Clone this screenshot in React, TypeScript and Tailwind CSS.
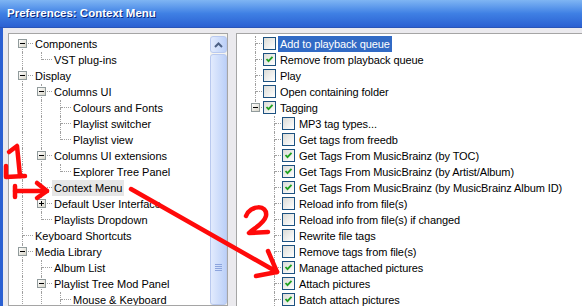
import React from "react";

// 偽のXPウィンドウ: 左がツリー、右がチェックボックス付きツリー
type Row = {
  label: string;
  rails: boolean[];
  first?: boolean;
  last?: boolean;
  exp?: "-" | "+";
  check?: boolean;
  selected?: "blue" | "gray";
};

const leftRows: Row[] = [
  { label: "Components", rails: [], first: true, exp: "-" },
  { label: "VST plug-ins", rails: [true], last: true },
  { label: "Display", rails: [], exp: "-" },
  { label: "Columns UI", rails: [true], exp: "-" },
  { label: "Colours and Fonts", rails: [true, true] },
  { label: "Playlist switcher", rails: [true, true] },
  { label: "Playlist view", rails: [true, true], last: true },
  { label: "Columns UI extensions", rails: [true], exp: "-" },
  { label: "Explorer Tree Panel", rails: [true, true], last: true },
  { label: "Context Menu", rails: [true], selected: "gray" },
  { label: "Default User Interface", rails: [true], exp: "+" },
  { label: "Playlists Dropdown", rails: [true], last: true },
  { label: "Keyboard Shortcuts", rails: [] },
  { label: "Media Library", rails: [], exp: "-" },
  { label: "Album List", rails: [true] },
  { label: "Playlist Tree Mod Panel", rails: [true], exp: "-" },
  { label: "Mouse & Keyboard", rails: [true, true] },
];

const rightRows: Row[] = [
  { label: "Add to playback queue", rails: [], check: false, selected: "blue" },
  { label: "Remove from playback queue", rails: [], check: true },
  { label: "Play", rails: [], check: false },
  { label: "Open containing folder", rails: [], check: false },
  { label: "Tagging", rails: [], check: true, exp: "-", last: true },
  { label: "MP3 tag types...", rails: [false], check: false },
  { label: "Get tags from freedb", rails: [false], check: false },
  { label: "Get Tags From MusicBrainz (by TOC)", rails: [false], check: true },
  { label: "Get Tags From MusicBrainz (by Artist/Album)", rails: [false], check: true },
  { label: "Get Tags From MusicBrainz (by MusicBrainz Album ID)", rails: [false], check: true },
  { label: "Reload info from file(s)", rails: [false], check: false },
  { label: "Reload info from file(s) if changed", rails: [false], check: false },
  { label: "Rewrite file tags", rails: [false], check: false },
  { label: "Remove tags from file(s)", rails: [false], check: false },
  { label: "Manage attached pictures", rails: [false], check: true },
  { label: "Attach pictures", rails: [false], check: true },
  { label: "Batch attach pictures", rails: [false], check: true },
];

const Rail = ({ on }: { on: boolean }) => (
  <div className="flex h-4 w-[19px] shrink-0">
    <div className={on ? "h-full w-[9px] border-r border-dotted border-[#a0a0a0]" : "h-full w-[9px]"} />
  </div>
);

const Expander = ({ kind }: { kind: "-" | "+" }) => (
  <div className="absolute left-[4px] top-[3px] flex h-[9px] w-[9px] items-center justify-center border border-[#919b9c] bg-gradient-to-br from-white to-[#d8d5c8]">
    <div className="relative h-[1px] w-[5px] bg-black">
      {kind === "+" && <div className="absolute left-[2px] top-[-2px] h-[5px] w-[1px] bg-black" />}
    </div>
  </div>
);

const Joint = ({ row, narrow }: { row: Row; narrow?: boolean }) => (
  <div
    className={
      narrow
        ? "relative grid h-4 w-[15px] shrink-0 grid-cols-[9px_6px] grid-rows-[8px_8px]"
        : "relative grid h-4 w-[19px] shrink-0 grid-cols-[9px_10px] grid-rows-[8px_8px]"
    }
  >
    <div className={row.first ? "" : "border-r border-dotted border-[#a0a0a0]"} />
    <div className="border-b border-dotted border-[#a0a0a0]" />
    <div className={row.last ? "" : "border-r border-dotted border-[#a0a0a0]"} />
    <div />
    {row.exp && <Expander kind={row.exp} />}
  </div>
);

const CheckBox = ({ on }: { on: boolean }) => (
  <div className="ml-[1px] mr-[2px] mt-[1px] flex h-[13px] w-[13px] shrink-0 items-center justify-center border border-[#1c5180] bg-gradient-to-br from-[#dcdcd7] to-white">
    {on && (
      <svg width="9" height="9" viewBox="0 0 9 9">
        <path d="M1.5 4 L3.5 6.2 L7.5 1.8" fill="none" stroke="#21a121" strokeWidth="1.8" />
      </svg>
    )}
  </div>
);

const Label = ({ row }: { row: Row }) => {
  let cls = "h-4 whitespace-nowrap px-[2px] leading-4 text-black";
  if (row.selected === "blue") cls = "h-4 whitespace-nowrap px-[2px] leading-4 bg-[#316ac5] text-white";
  if (row.selected === "gray") cls = "h-4 whitespace-nowrap px-[2px] leading-4 bg-[#e6e6e6] text-black";
  return <div className={cls}>{row.label}</div>;
};

const ScrollBar = () => (
  <div className="flex w-[17px] shrink-0 flex-col bg-[#f5f4ef] pt-[2px]">
    <div className="flex h-[17px] items-center justify-center rounded-[3px] border border-[#b9c9ef] bg-gradient-to-r from-[#e2ebfd] to-[#bcd0f8]">
      <svg width="9" height="6" viewBox="0 0 9 6">
        <path d="M1 5 L4.5 1.5 L8 5" fill="none" stroke="#4d6185" strokeWidth="2" />
      </svg>
    </div>
    <div className="mt-[1px] flex flex-1 flex-col items-center justify-end rounded-[3px] border border-[#b9c9ef] bg-gradient-to-r from-[#e2ebfd] to-[#bcd0f8] pb-[33px]">
      <div className="flex flex-col gap-[1px]">
        <div className="h-[1px] w-[7px] bg-[#8ca4dd]" />
        <div className="h-[1px] w-[7px] bg-[#8ca4dd]" />
        <div className="h-[1px] w-[7px] bg-[#8ca4dd]" />
        <div className="h-[1px] w-[7px] bg-[#8ca4dd]" />
      </div>
    </div>
  </div>
);

export default function App() {
  return (
    <div className="relative h-[306px] w-[582px] overflow-hidden bg-[#ebeaee] font-['Liberation_Sans',Arial,sans-serif] text-[11px]">
      <div className="flex h-[28px] items-center border-b border-[#2a55b8] bg-gradient-to-b from-[#7fb5f3] via-[#3f80e4] to-[#2b60d2] pl-[7px]">
        <span className="text-[11.5px] font-bold text-white [text-shadow:1px_1px_0_#0a2a80]">Preferences: Context Menu</span>
      </div>
      <div className="flex h-[278px] gap-[8px] border-l-[3px] border-[#2b60d2] pl-[5px] pt-[5px]">
        <div className="flex w-[220px] shrink-0 border border-[#a5a5a5] bg-white">
          <div className="flex-1 overflow-hidden pl-[5px] pt-[2px]">
            {leftRows.map((r) => (
              <div key={r.label} className="flex h-4">
                {r.rails.map((on, i) => (
                  <Rail key={i} on={on} />
                ))}
                <Joint row={r} />
                <Label row={r} />
              </div>
            ))}
          </div>
          <ScrollBar />
        </div>
        <div className="flex-1 overflow-hidden border-l border-t border-[#a5a5a5] bg-white pl-[10px] pt-[2px]">
          {rightRows.map((r) => (
            <div key={r.label} className="flex h-4 tracking-[-0.1px]">
              {r.rails.map((on, i) => (
                <Rail key={i} on={on} />
              ))}
              <Joint row={r} narrow />
              <CheckBox on={!!r.check} />
              <Label row={r} />
            </div>
          ))}
        </div>
      </div>
      <svg className="pointer-events-none absolute inset-0" width="582" height="306" viewBox="0 0 582 306">
        <g fill="none" stroke="#ff0a0a" strokeWidth="4.5" strokeLinecap="round" strokeLinejoin="round">
          <path d="M9 152 L17 146 L20 176" />
          <path d="M6 166 L6 177 L25 176" />
          <path d="M15 186 L15 197" />
          <path d="M15 191 L47 191" />
          <path d="M37 183 L47 191 L37 198" />
          <path d="M131 189 L277 272" />
          <path d="M268 251 L277 272 L256 276" />
          <path d="M246 216 C250 205 268 204 266 216 C264 224 254 228 249 233 L268 232" />
        </g>
      </svg>
    </div>
  );
}
